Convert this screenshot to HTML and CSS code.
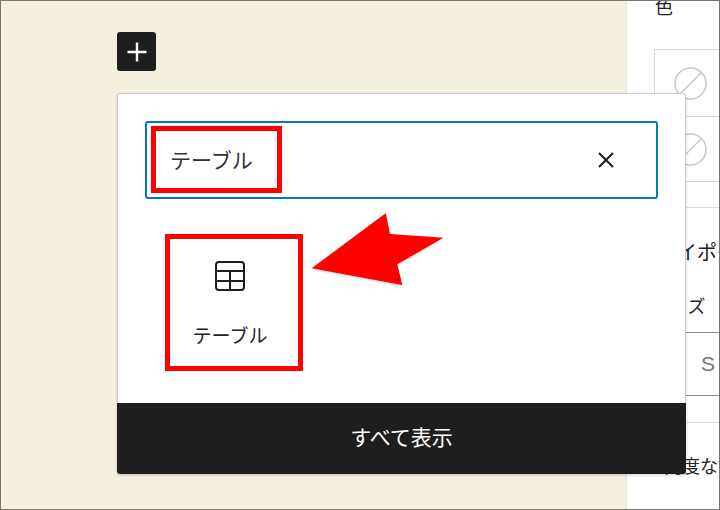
FILE: index.html
```html
<!DOCTYPE html>
<html lang="ja">
<head>
<meta charset="utf-8">
<title>テーブル</title>
<link rel="stylesheet" href="styles.css">
</head>
<body>
<div class="frame">
  <main class="canvas">
    <button class="add-btn" aria-label="追加">
      <svg width="24" height="24" viewBox="0 0 24 24"><path d="M12 2.5v19M2.5 12h19" stroke="#fff" stroke-width="2.4" fill="none"/></svg>
    </button>
  </main>
  <aside class="sidebar">
    <div class="sb-title">色</div>
    <div class="swatches">
      <div class="swatch"><svg width="33" height="33" viewBox="0 0 33 33"><circle cx="16.5" cy="16.5" r="15.5" fill="none" stroke="#c8c8c8" stroke-width="1.5"/><path d="M5.5 27.5l22-22" stroke="#c8c8c8" stroke-width="1.5"/></svg></div>
      <div class="swatch swatch-last"><svg width="33" height="33" viewBox="0 0 33 33"><circle cx="16.5" cy="16.5" r="15.5" fill="none" stroke="#c8c8c8" stroke-width="1.5"/><path d="M5.5 27.5l22-22" stroke="#c8c8c8" stroke-width="1.5"/></svg></div>
    </div>
    <div class="sb-rule"></div>
    <div class="sb-typo">タイポグラフィ</div>
    <div class="sb-size">サイズ</div>
    <div class="size-control"><span class="size-s">S</span></div>
    <div class="sb-rule-2"></div>
    <div class="sb-adv">高度な設定</div>
  </aside>

  <section class="popover">
    <div class="search">
      <span class="search-text">テーブル</span>
      <svg class="search-x" width="18" height="18" viewBox="0 0 18 18"><path d="M2 2l14 14M16 2 2 16" stroke="#1e1e1e" stroke-width="2" fill="none"/></svg>
    </div>
    <div class="block-item">
      <svg width="30" height="30" viewBox="0 0 30 30"><rect x="1" y="1" width="28" height="28" rx="3" fill="none" stroke="#1e1e1e" stroke-width="2"/><path d="M1 10h28M1 20h28M15 10v19" stroke="#1e1e1e" stroke-width="2" fill="none"/></svg>
      <span class="block-label">テーブル</span>
    </div>
    <div class="show-all">すべて表示</div>
  </section>

  <div class="mark mark-search"></div>
  <div class="mark mark-block"></div>
  <svg class="arrow" width="720" height="510" viewBox="0 0 720 510"><polygon points="311.7,268.3 385.7,213.3 390,234 443.3,237.7 397.3,264.3 402.3,285" fill="#ff0000"/></svg>
</div>
</body>
</html>
```

FILE: styles.css
```css
* { box-sizing: border-box; }
html, body { margin: 0; padding: 0; }
body {
  width: 720px;
  height: 510px;
  overflow: hidden;
  font-family: "Noto Sans CJK JP", "Liberation Sans", sans-serif;
  color: #333;
}
.frame {
  position: relative;
  display: flex;
  width: 720px;
  height: 510px;
  border: 1px solid #77746f;
  overflow: hidden;
  background: #fff;
}
.canvas {
  width: 625px;
  flex: none;
  padding: 31px 0 0 116px;
  background: #f5efdf;
}
.add-btn {
  display: flex;
  align-items: center;
  justify-content: center;
  width: 39px;
  height: 39px;
  padding: 0;
  border: 0;
  border-radius: 3px;
  background: #1e1e1e;
}
.sidebar {
  flex: 1;
  min-width: 0;
  border-left: 1px solid #e4e4e4;
  overflow: hidden;
  white-space: nowrap;
}
.sb-title {
  height: 46px;
  margin-left: 28px;
  margin-top: -8px;
  font-size: 18px;
  line-height: 26px;
  color: #222;
}
.swatches { margin-left: 27px; margin-top: 10px; }
.swatch {
  display: flex;
  align-items: center;
  height: 67px;
  padding-left: 19px;
  border: 1px solid #d8d8d8;
  border-right: 0;
  border-bottom: 0;
}
.swatch-last { height: 66px; border-bottom: 1px solid #d8d8d8; }
.sb-rule { height: 26px; border-bottom: 1px solid #ddd; }
.sb-typo {
  margin-top: 31px;
  margin-left: 30px;
  font-size: 20px;
  line-height: 26px;
  color: #222;
}
.sb-size {
  margin-top: 27px;
  margin-left: 25px;
  font-size: 18px;
  line-height: 26px;
  color: #222;
}
.size-control {
  display: flex;
  align-items: center;
  height: 64px;
  margin-top: 14px;
  margin-left: 27px;
  padding-left: 47px;
  border-top: 1px solid #888;
  border-bottom: 1px solid #888;
}
.size-s { font-size: 21px; color: #777; font-family: "Liberation Sans", sans-serif; }
.sb-rule-2 { height: 27px; border-bottom: 1px solid #ddd; }
.sb-adv {
  margin-top: 29px;
  margin-left: 37px;
  font-size: 18px;
  line-height: 26px;
  color: #222;
}
.popover {
  position: absolute;
  left: 116px;
  top: 92px;
  display: flex;
  flex-direction: column;
  width: 569px;
  height: 381px;
  padding-top: 27px;
  background: #fff;
  border: 1px solid #ccc;
  border-radius: 3px;
  box-shadow: 0 1px 3px rgba(0, 0, 0, .2);
}
.search {
  display: flex;
  align-items: center;
  justify-content: space-between;
  height: 78px;
  margin: 0 27px;
  padding: 0 41px 0 23px;
  border: 2px solid #007cba;
  border-radius: 3px;
}
.search-text { margin-bottom: 3px; font-size: 21px; line-height: 28px; color: #333; }
.search-x { flex: none; }
.block-item {
  display: flex;
  flex-direction: column;
  align-items: center;
  width: 128px;
  margin: 62px 0 0 48px;
  color: #222;
}
.block-label { margin-top: 30px; font-size: 19px; line-height: 28px; white-space: nowrap; }
.show-all {
  display: flex;
  align-items: center;
  justify-content: center;
  margin-top: auto;
  height: 71px;
  margin-left: -1px;
  margin-right: -1px;
  margin-bottom: -1px;
  padding-bottom: 5px;
  background: #1e1e1e;
  border-radius: 0 0 3px 3px;
  color: #fff;
  font-size: 21px;
}
.mark {
  position: absolute;
  border: 5px solid #ff0000;
}
.mark-search { left: 150px; top: 125px; width: 131px; height: 67px; }
.mark-block { left: 164px; top: 233px; width: 138px; height: 137px; }
.arrow {
  position: absolute;
  left: -1px;
  top: -1px;
  filter: drop-shadow(0 1px 1px rgba(0, 0, 0, .2));
}
```
